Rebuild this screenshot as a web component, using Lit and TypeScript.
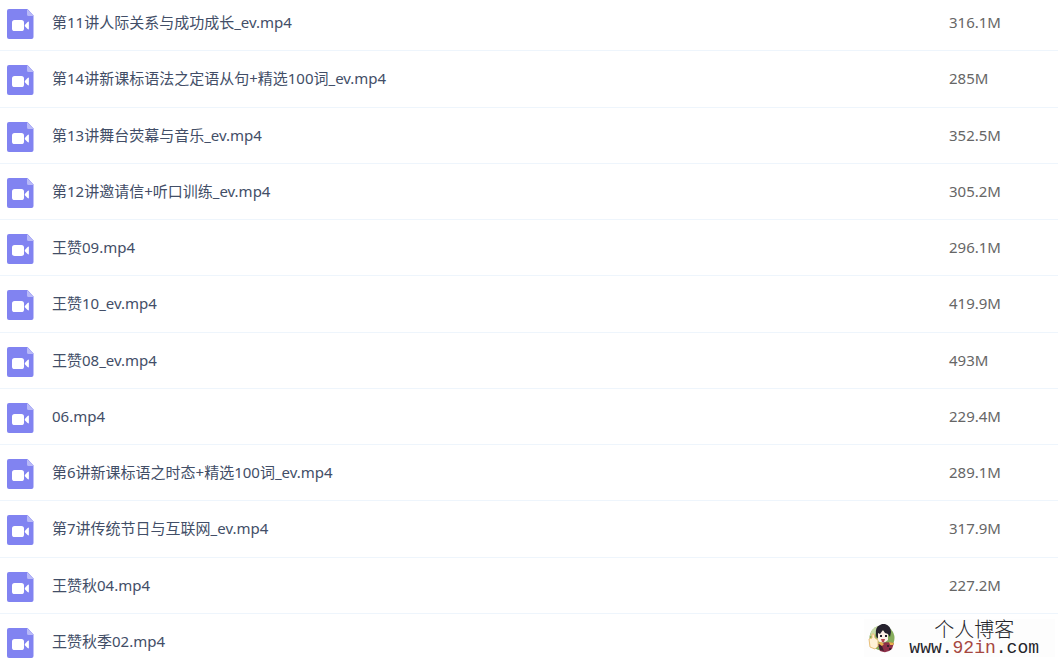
import { LitElement, html, css, svg } from "lit";
import { customElement, property } from "lit/decorators.js";

interface FileEntry {
  name: string;
  size: string;
}

const FILES: FileEntry[] = [
  { name: "第11讲人际关系与成功成长_ev.mp4", size: "316.1M" },
  { name: "第14讲新课标语法之定语从句+精选100词_ev.mp4", size: "285M" },
  { name: "第13讲舞台荧幕与音乐_ev.mp4", size: "352.5M" },
  { name: "第12讲邀请信+听口训练_ev.mp4", size: "305.2M" },
  { name: "王赞09.mp4", size: "296.1M" },
  { name: "王赞10_ev.mp4", size: "419.9M" },
  { name: "王赞08_ev.mp4", size: "493M" },
  { name: "06.mp4", size: "229.4M" },
  { name: "第6讲新课标语之时态+精选100词_ev.mp4", size: "289.1M" },
  { name: "第7讲传统节日与互联网_ev.mp4", size: "317.9M" },
  { name: "王赞秋04.mp4", size: "227.2M" },
  { name: "王赞秋季02.mp4", size: "" },
];

@customElement("video-file-icon")
export class VideoFileIcon extends LitElement {
  static styles = css`
    :host {
      display: block;
      flex: none;
    }
    .icon {
      display: block;
    }
  `;

  render() {
    return html`<svg class="icon" width="27" height="30" viewBox="0 0 27 30" aria-hidden="true">
      ${svg`
        <path fill="#8183f1" d="M2 0H20.5L26.5 6.5V28a2 2 0 0 1-2 2H2a2 2 0 0 1-2-2V2a2 2 0 0 1 2-2z"/>
        <path fill="#b9baf8" d="M20 0L26.6 7H21.5A1.5 1.5 0 0 1 20 5.5z"/>
        <rect fill="#fff" x="5" y="11" width="12" height="11" rx="2.6"/>
        <path fill="#fff" d="M17.8 16.1L20.6 12.9Q21.9 11.9 21.9 13.2V19.8Q21.9 21.1 20.6 20.1L17.8 17.2z"/>
      `}
    </svg>`;
  }
}

@customElement("blog-mark")
export class BlogMark extends LitElement {
  static styles = css`
    :host {
      display: flex;
      align-items: center;
      gap: 12px;
      padding: 0 16px 0 4px;
      background: #fdfdfd;
      color: #25252b;
    }
    .avatar {
      display: block;
      flex: none;
    }
    .words {
      display: flex;
      flex-direction: column;
      align-items: center;
    }
    .title {
      font: 20px/20px "Noto Sans CJK SC", sans-serif;
      font-weight: 300;
    }
    .site {
      font: 18px/18px "Liberation Mono", monospace;
      color: inherit;
      text-decoration: none;
    }
    .accent {
      color: #a6473f;
    }
  `;

  render() {
    return html`
      <svg class="avatar" width="29" height="30" viewBox="0 0 29 30" aria-hidden="true">
        ${svg`
          <circle cx="14" cy="15" r="12.5" fill="#86ad5c"/>
          <path fill="#c9dba9" d="M2 13Q3 5 10 3L7 12z"/>
          <path fill="#fbf1e8" d="M9 8Q15 5 20 10L20 17Q15 22 10 18z"/>
          <path fill="#26222e" d="M8 11Q7 4 12 2L14 1L17 1Q23 3 23 9L22 14L20 11L17 10L15 7L12 11L10 10L10 15Q8 15 8 11z"/>
          <path fill="#26222e" d="M12 12h2v2h-2zM17 12h2v2h-2z"/>
          <path fill="#b64750" d="M13 16h4l-1 3h-2z"/>
          <path fill="#8d2f48" d="M10 21Q16 18 26 20L24 26Q19 31 12 28z"/>
          <path fill="#3e2030" d="M10 21l4 2 2 5-4-1zM19 22h2v2h-2zM21 25h2v2h-2z"/>
          <path fill="#e8b14d" d="M10 20l3-1 3 2-2 2zM21 19l5 1-1 2-3 0z"/>
          <path fill="#fff1d6" stroke="#e8bf7a" d="M1 16L4 15L4 11L6 11L7 15L10 17V23L7 26L2 24z"/>
        `}
      </svg>
      <div class="words">
        <span class="title">个人博客</span>
        <a class="site" href="#">www.<span class="accent">92in</span>.com</a>
      </div>
    `;
  }
}

@customElement("app-root")
export class AppRoot extends LitElement {
  @property({ attribute: false }) files: FileEntry[] = FILES;

  static styles = css`
    :host {
      display: block;
      position: relative;
      height: 100vh;
      overflow: hidden;
      background: #fff;
      font: 15px/20px "Noto Sans", "Noto Sans CJK SC", sans-serif;
    }
    .files {
      width: 100%;
      margin-top: -5px;
      border-collapse: separate;
      border-spacing: 0;
      table-layout: fixed;
    }
    .name,
    .size {
      box-sizing: border-box;
      height: 56px;
      border-bottom: 1px solid #eef5fc;
      text-align: left;
      font-weight: 400;
      vertical-align: top;
      white-space: nowrap;
    }
    .row:nth-child(4n + 2) .name,
    .row:nth-child(4n + 2) .size {
      height: 57px;
    }
    .name {
      padding: 10px 0 0 7px;
      color: #424e67;
    }
    .size {
      width: 109px;
      padding: 17px 0 0;
      color: #666;
    }
    .entry {
      display: flex;
      align-items: center;
      gap: 18px;
    }
    .file-icon {
      padding-top: 4px;
    }
    .mark {
      position: absolute;
      right: 3px;
      bottom: 3px;
    }
  `;

  render() {
    return html`
      <table class="files">
        <tbody>
          ${this.files.map(
            (file) => html`<tr class="row">
              <th class="name" scope="row">
                <div class="entry">
                  <video-file-icon class="file-icon"></video-file-icon>
                  <span>${file.name}</span>
                </div>
              </th>
              <td class="size">${file.size}</td>
            </tr>`
          )}
        </tbody>
      </table>
      <blog-mark class="mark"></blog-mark>
    `;
  }
}
